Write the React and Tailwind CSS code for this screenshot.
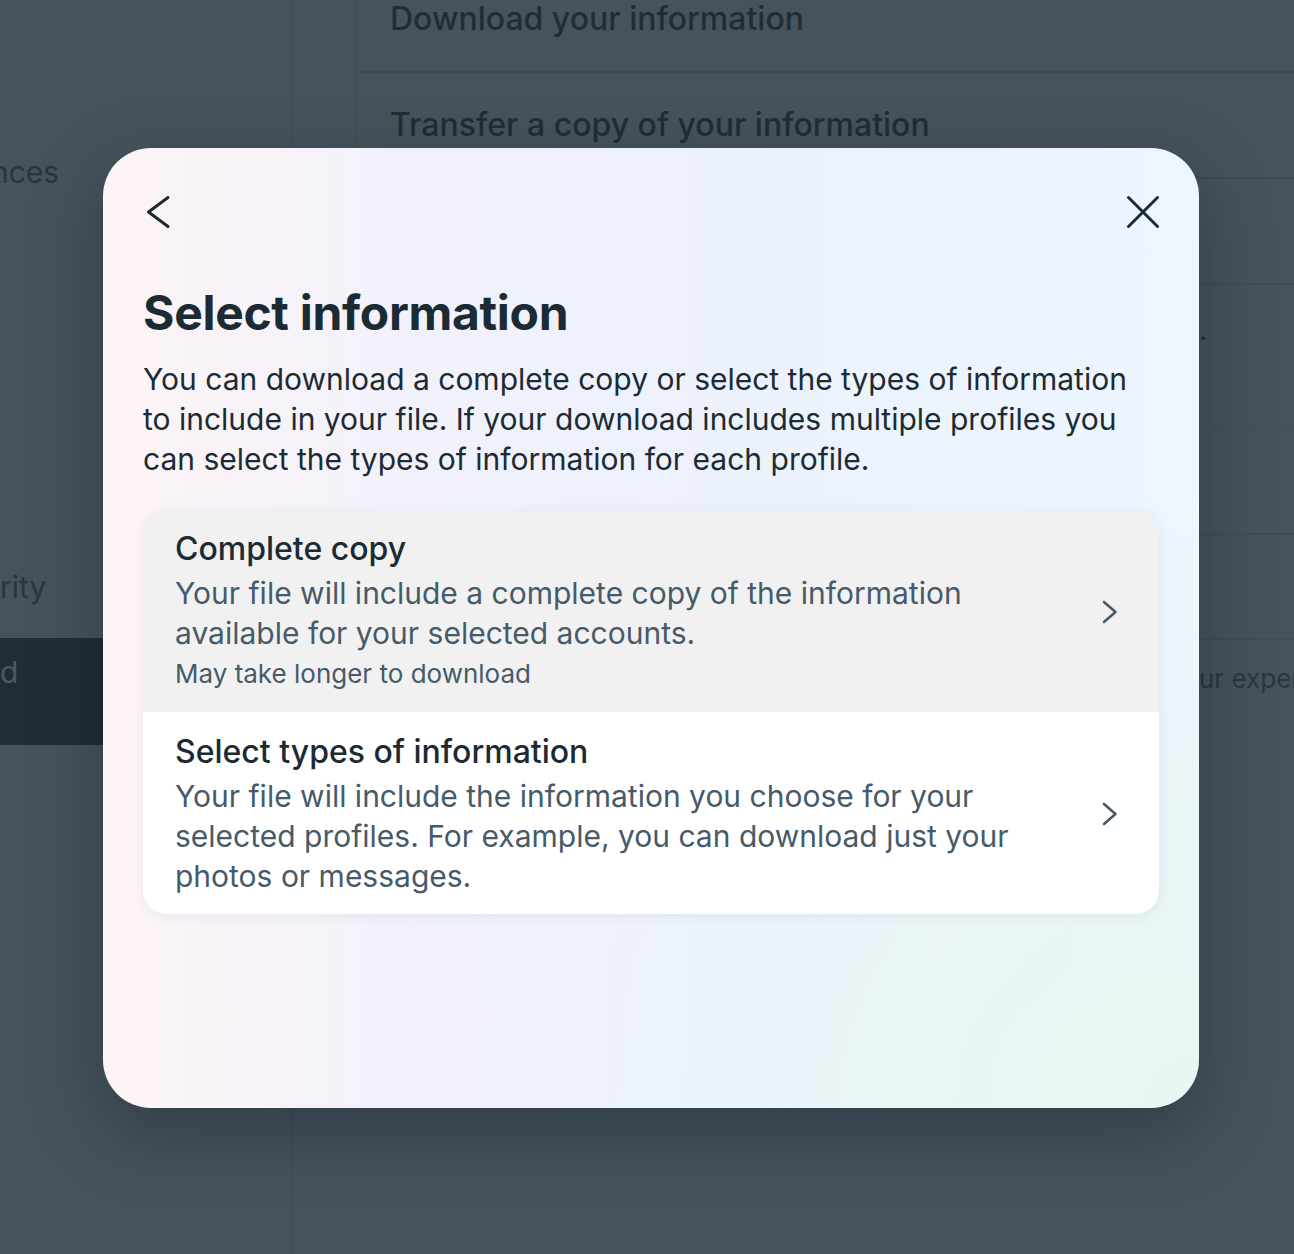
import React from "react";

const font = { fontFamily: "Inter, 'Noto Sans', sans-serif" };

const BackIcon = () => (
  <svg width="40" height="40" viewBox="0 0 40 40" fill="none">
    <path d="M25 5.5 L5.5 20 L25 34.5" stroke="#1c2b33" strokeWidth="3" strokeLinecap="round" strokeLinejoin="round" />
  </svg>
);

const CloseIcon = () => (
  <svg width="40" height="40" viewBox="0 0 40 40" fill="none">
    <path d="M9.5 5.5 L38.5 34.5 M38.5 5.5 L9.5 34.5" stroke="#1c2b33" strokeWidth="3" strokeLinecap="round" />
  </svg>
);

const Chevron = () => (
  <svg width="16" height="24" viewBox="0 0 16 24" fill="none">
    <path d="M2 2 L13.5 12 L2 22" stroke="#465a69" strokeWidth="2.6" strokeLinecap="round" strokeLinejoin="round" />
  </svg>
);

const Option = ({ title, lines, note, bg, top }) => (
  <div className={`flex items-center justify-between pl-[32px] pr-[41px] pb-[18px] ${top} ${bg}`}>
    <div className="w-[880px]">
      <div className="text-[32px] leading-[40px] font-medium text-[#1c2b33]">{title}</div>
      <div className="mt-[4px] text-[30px] leading-[40px] text-[#465a69]">{lines}</div>
      {note && <div className="text-[26px] leading-[41px] text-[#465a69]">{note}</div>}
    </div>
    <Chevron />
  </div>
);

export default function App() {
  return (
    <div className="relative w-full h-[1254px] overflow-hidden bg-[#46535c]" style={font}>
      {/* page behind the dialog */}
      <div className="flex h-full">
        <div className="w-[292px] shrink-0 border-r border-[#3f4b54] flex flex-col text-[30px] leading-[40px] text-[#29363f]">
          <div className="h-[119px]" />
          <div className="h-[106px] flex items-center -ml-[9px]">nces</div>
          <div className="h-[310px]" />
          <div className="h-[103px] flex items-center">rity</div>
          <div className="h-[107px] bg-[#212d36] text-[#4b5861] pt-[14px] -ml-[2px] pl-[2px]">d</div>
        </div>
        <div className="w-[64px] shrink-0" />
        <div className="flex-1 -mt-[33px] flex flex-col text-[32px] font-medium text-[#212d35]">
          <div className="border-l border-[#3f4b54]">
            <div className="h-[106px] flex items-center pl-[33px] border-b-2 border-[#3f4b54]">Download your information</div>
            <div className="h-[106px] flex items-center pl-[33px] border-b-2 border-[#3f4b54]">Transfer a copy of your information</div>
            <div className="h-[106px] border-b-2 border-[#424e57]" />
          </div>
          <div className="h-[144px] border-b border-[#424e57] pt-[26px] pl-[33px]">
            <div className="w-[818px] text-right text-[26px] font-normal whitespace-nowrap overflow-hidden">information across apps and services.</div>
          </div>
          <div className="h-[106px] border-b-2 border-[#424e57]" />
          <div className="h-[105px] border-b-2 border-[#424e57]" />
          <div className="pl-[33px] pt-[19px] text-[26px] font-normal text-[#2a373f] whitespace-nowrap">
            <span className="inline-block w-[810px] overflow-hidden align-bottom">Manage how your information is used to improve yo</span>
            ur experiences
          </div>
        </div>
      </div>

      {/* dialog */}
      <div className="absolute left-[103px] top-[148px] w-[1096px] h-[960px] rounded-[48px] overflow-hidden shadow-[0_24px_70px_rgba(10,20,28,0.35)] bg-[radial-gradient(ellipse_at_100%_100%,#e8f6f1_0%,rgba(232,246,241,0)_45%),linear-gradient(90deg,#fdf4f6_0%,#f1f1fb_30%,#ebf2fc_60%,#edf5fe_100%)] px-[40px] pt-[44px]">
        <div className="flex items-center justify-between h-[40px]">
          <BackIcon />
          <CloseIcon />
        </div>
        <h1 className="mt-[53px] text-[48px] leading-[56px] font-bold text-[#1c2b33] tracking-[-0.3px]">Select information</h1>
        <p className="mt-[18px] text-[30px] leading-[40px] text-[#1c2b33]">
          You can download a complete copy or select the types of information to include in your file. If your download includes multiple profiles you can select the types of information for each profile.
        </p>
        <div className="mt-[32px] rounded-[24px] overflow-hidden shadow-[0_2px_14px_rgba(20,60,120,0.07)]">
          <Option
            bg="bg-[#f1f1f1]"
            top="pt-[18px]"
            title="Complete copy"
            lines="Your file will include a complete copy of the information available for your selected accounts."
            note="May take longer to download"
          />
          <Option
            bg="bg-white"
            top="pt-[20px]"
            title="Select types of information"
            lines="Your file will include the information you choose for your selected profiles. For example, you can download just your photos or messages."
          />
        </div>
      </div>
    </div>
  );
}
